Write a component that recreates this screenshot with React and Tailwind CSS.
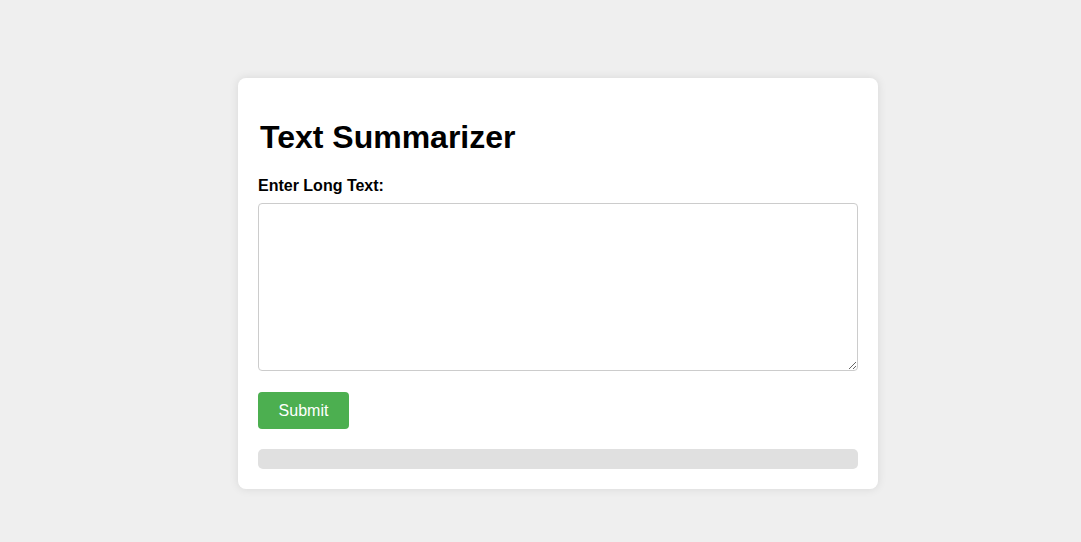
export default function App() {
  return (
    <div className="min-h-[542px] bg-[#efefef] pt-[78px] font-['Liberation_Sans',Arial,sans-serif] text-black">
      <div className="ml-[238px] w-[640px] rounded-lg bg-white p-5 shadow-[0_0_10px_rgba(0,0,0,0.1)]">
        <h1 className="mt-[21px] mb-[21px] ml-[2px] text-[32px] leading-[37px] font-bold">Text Summarizer</h1>
        <label className="block text-base leading-[18px] font-bold">Enter Long Text:</label>
        <textarea
          className="mt-[8px] block h-[168px] w-full rounded border border-[#ccc] p-2.5 text-base outline-none"
        />
        <button className="mt-[21px] block h-[37px] w-[91px] rounded bg-[#4caf50] text-base text-white">Submit</button>
        <div className="mt-5 h-5 w-full rounded-[5px] bg-[#e0e0e0]" />
      </div>
    </div>
  )
}
